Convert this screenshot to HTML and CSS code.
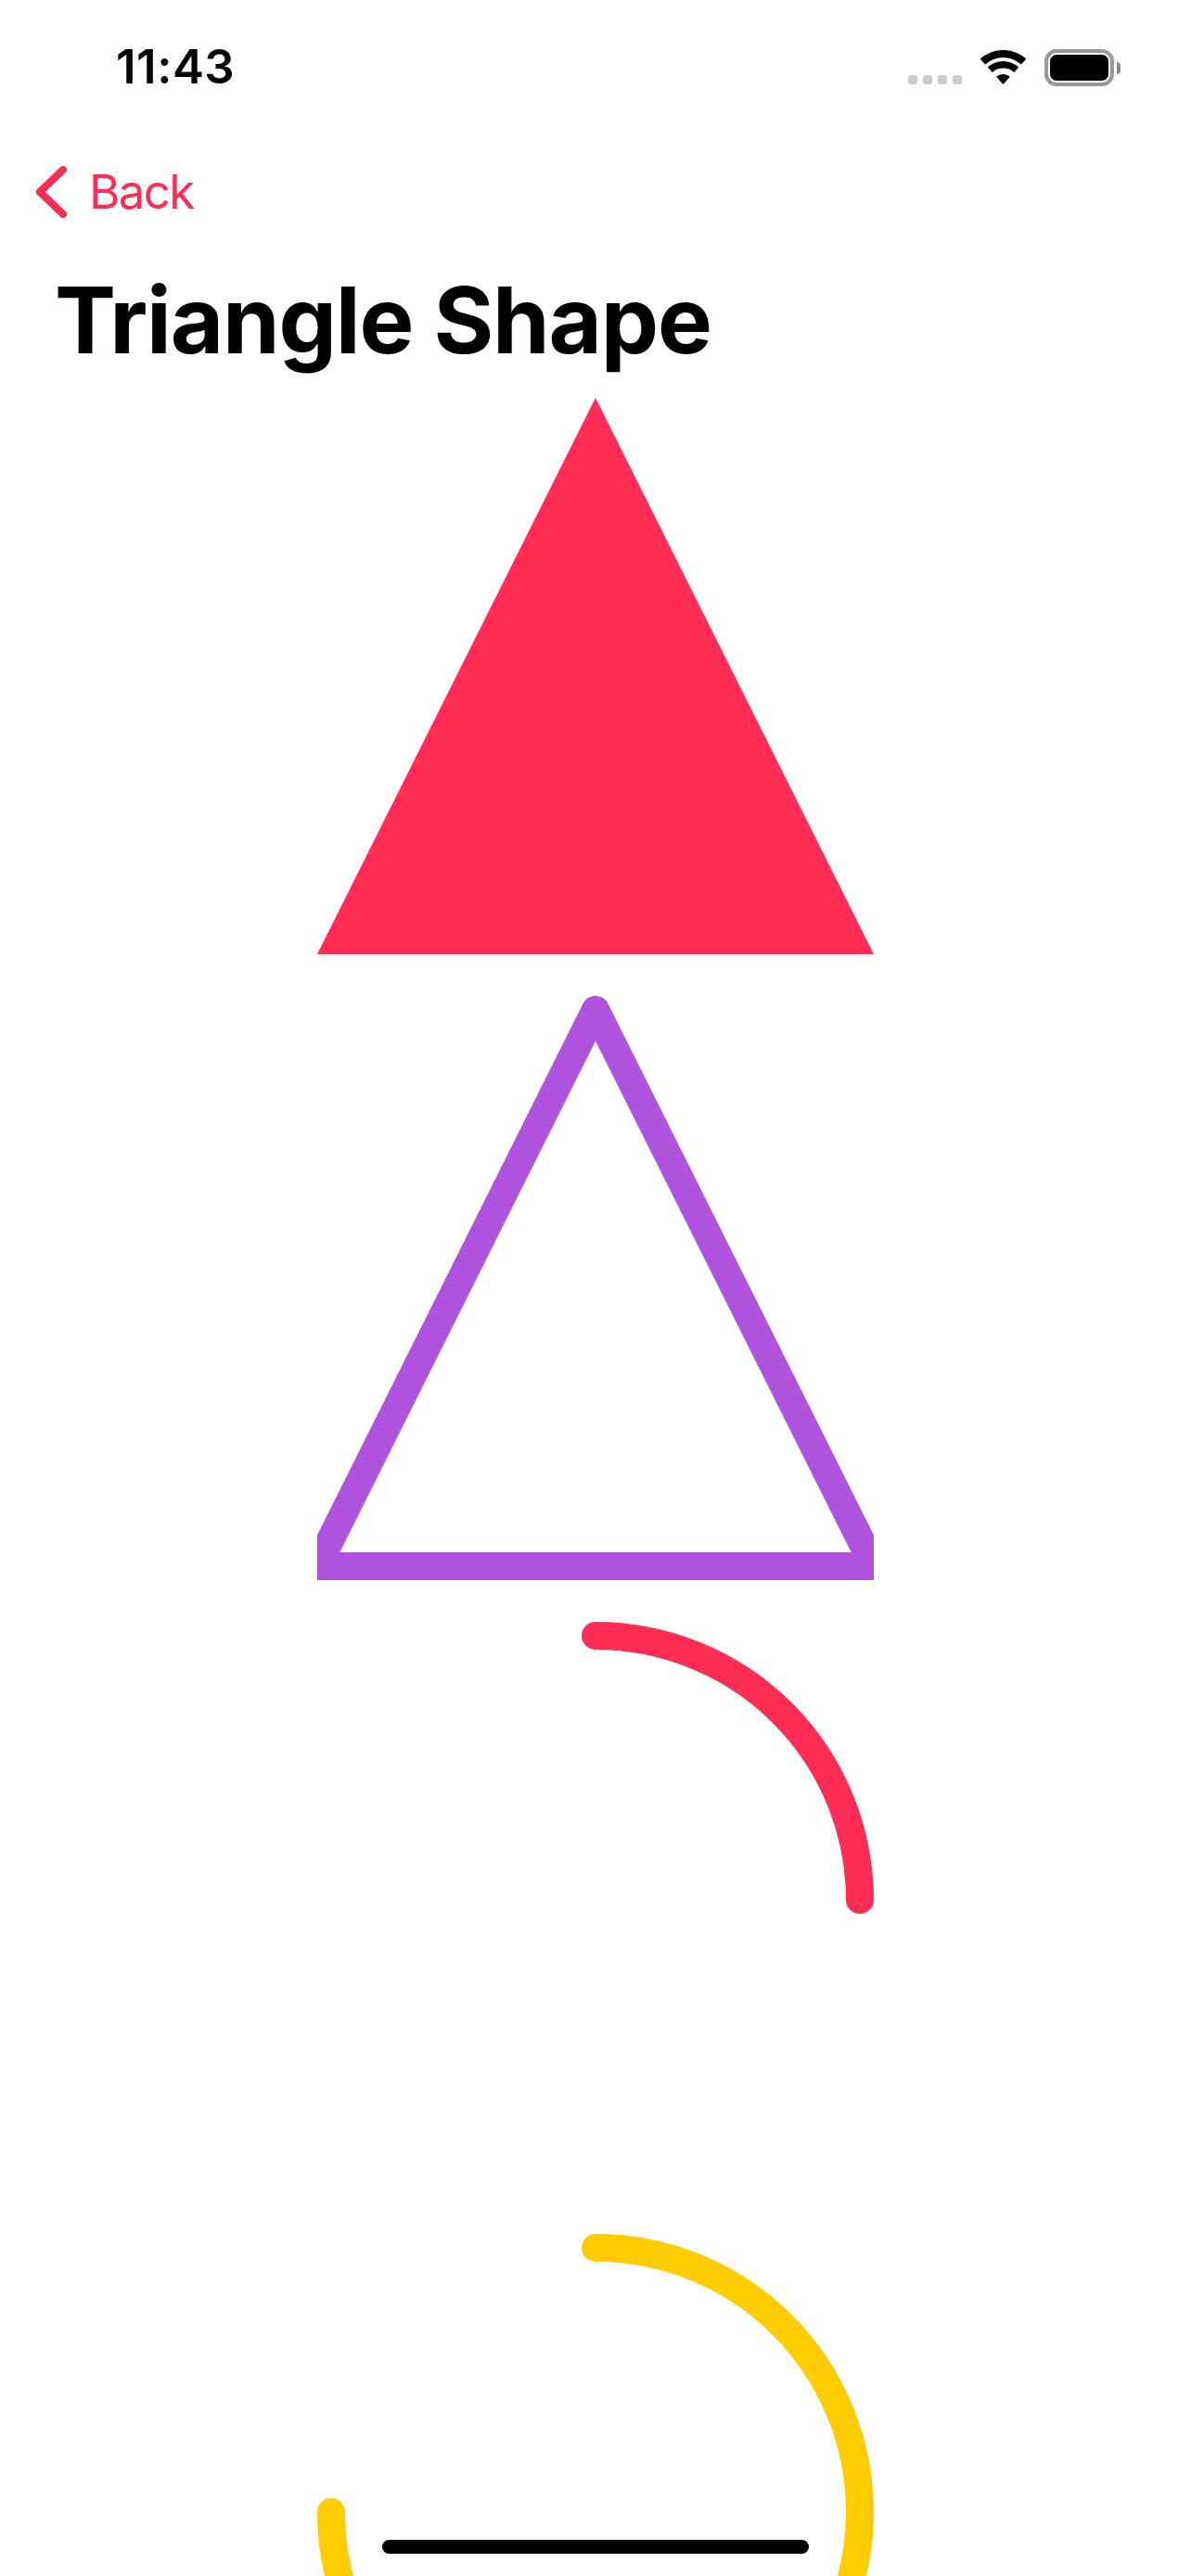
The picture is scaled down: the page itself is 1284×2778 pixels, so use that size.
FILE: index.html
```html
<!DOCTYPE html>
<html lang="en">
<head>
    <meta charset="UTF-8">
    <meta name="viewport" content="width=device-width, initial-scale=1.0">
    <title>Triangle Shape</title>
    <link rel="stylesheet" href="styles.css">
</head>
<body>

<div class="status-bar">
    <span class="time">11:43</span>
    <div class="status-icons">
        <div class="signal">
            <span></span><span></span><span></span><span></span>
        </div>
        <svg class="wifi" width="51" height="37" viewBox="0 0 51 37">
            <path d="M.7 9.5A37 37 0 0 1 50.3 9.5L44.9 15.45A29 29 0 0 0 6.1 15.45Z"/>
            <path d="M8.8 18.4A25 25 0 0 1 42.2 18.4L37.2 24A17.5 17.5 0 0 0 13.8 24Z"/>
            <path d="M18.1 28.8A11 11 0 0 1 32.9 28.8L25.5 37Z"/>
        </svg>
        <div class="battery"><div class="battery-level"></div></div>
        <div class="battery-nub"></div>
    </div>
</div>

<div class="nav">
    <svg class="chevron" width="34" height="56" viewBox="0 0 34 56">
        <path d="M29 4L4 28L29 52"/>
    </svg>
    <span class="back">Back</span>
</div>

<h1>Triangle Shape</h1>

<div class="shapes">
    <svg class="shape" viewBox="0 0 600 600">
        <path class="fill-red" d="M300 0L600 600H0Z"/>
    </svg>
    <svg class="shape" viewBox="0 0 600 600">
        <clipPath id="frame-clip"><rect x="0" y="-20" width="600" height="640"/></clipPath>
        <path class="line line-purple" clip-path="url(#frame-clip)" d="M300 0L600 600H0L300 0"/>
    </svg>
    <svg class="shape" viewBox="0 0 600 600">
        <path class="line line-red" d="M300 15A285 285 0 0 1 585 300"/>
    </svg>
    <svg class="shape" viewBox="0 0 600 600">
        <path class="line line-yellow" d="M300 15A285 285 0 1 1 15 300"/>
    </svg>
</div>

<div class="home-indicator"></div>

</body>
</html>
```

FILE: styles.css
```css
html, body {
    margin: 0;
    padding: 0;
}
body {
    position: relative;
    width: 1284px;
    height: 2778px;
    overflow: hidden;
    background-color: #fff;
    font-family: Inter, "Liberation Sans", sans-serif;
    color: #000;
}
.status-bar {
    display: flex;
    justify-content: space-between;
    height: 172px;
    padding: 42px 76px 0 125px;
    box-sizing: border-box;
}
.time {
    font-size: 51px;
    font-weight: 600;
    line-height: 60px;
    letter-spacing: 0.5px;
}
.status-icons {
    display: flex;
    align-items: flex-start;
}
.signal {
    display: flex;
    gap: 6px;
    margin-top: 39px;
}
.signal span {
    width: 10px;
    height: 10px;
    border-radius: 3px;
    background-color: #ccc;
}
.wifi {
    margin: 12px 0 0 19px;
}
.battery {
    width: 75px;
    height: 40px;
    margin: 11px 0 0 19px;
    box-sizing: border-box;
    border: 4px solid #999;
    border-radius: 13px;
    padding: 2px;
}
.battery-level {
    height: 100%;
    border-radius: 7px;
    background-color: #000;
}
.battery-nub {
    width: 4px;
    height: 13px;
    margin: 25px 0 0 3px;
    border-radius: 0 6px 6px 0;
    background-color: #888;
}
.nav {
    display: flex;
    align-items: center;
    height: 70px;
    padding-left: 39px;
}
.chevron path {
    fill: none;
    stroke: #ff2d55;
    stroke-width: 8;
    stroke-linecap: round;
    stroke-linejoin: round;
}
.back {
    margin-left: 23px;
    font-size: 51px;
    line-height: 60px;
    letter-spacing: -1.6px;
    color: #ff2d55;
}
h1 {
    margin: 0;
    padding: 41px 0 0 59px;
    height: 146px;
    font-size: 99px;
    font-weight: 700;
    line-height: 124px;
    letter-spacing: -1.2px;
}
.shapes {
    display: flex;
    flex-direction: column;
    align-items: center;
    gap: 60px;
}
.shape {
    display: block;
    flex: none;
    width: 600px;
    height: 600px;
    overflow: visible;
}
.fill-red {
    fill: #ff2d55;
}
.line {
    fill: none;
    stroke-width: 30;
    stroke-linecap: round;
}
.line-purple {
    stroke: #af52de;
}
.line-red {
    stroke: #ff2d55;
}
.line-yellow {
    stroke: #fc0;
}
.home-indicator {
    position: absolute;
    left: 412px;
    bottom: 24px;
    width: 460px;
    height: 15px;
    border-radius: 8px;
    background-color: #000;
}
```
